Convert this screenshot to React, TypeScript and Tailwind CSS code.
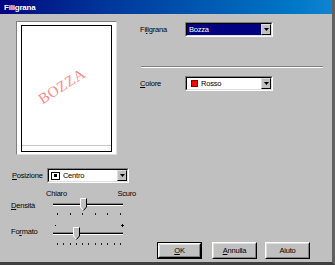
import React from "react";

const sunken = "border-t-[#808080] border-l-[#808080] border-r-white border-b-white";

function Arrow() {
  return (
    <div className="w-[10px] h-full bg-[#c0c0c0] border border-t-[#dfdfdf] border-l-[#dfdfdf] border-r-black border-b-black flex items-center justify-center">
      <svg width="5" height="3" viewBox="0 0 5 3">
        <polygon points="0,0 5,0 2.5,3" fill="#000" />
      </svg>
    </div>
  );
}

function Combo({
  className,
  children,
  selected,
}: {
  className: string;
  children: React.ReactNode;
  selected?: boolean;
}) {
  return (
    <div className={`h-[15px] border ${sunken} ${className}`}>
      <div className="h-full border border-t-black border-l-black border-r-[#dfdfdf] border-b-[#dfdfdf] bg-white flex">
        <div
          className={`flex-1 flex items-center gap-[3px] pl-[2px] ${
            selected ? "bg-[#000080] text-white" : "text-black"
          }`}
        >
          {children}
        </div>
        <Arrow />
      </div>
    </div>
  );
}

function Button({ children, isDefault }: { children: React.ReactNode; isDefault?: boolean }) {
  const inner = (
    <div className="w-full h-full border border-t-white border-l-white border-r-black border-b-black">
      <div className="w-full h-full border border-t-[#dfdfdf] border-l-[#dfdfdf] border-r-[#808080] border-b-[#808080] flex items-center justify-center bg-[#c0c0c0]">
        {children}
      </div>
    </div>
  );
  return (
    <div className={`w-[45px] h-[17px] ${isDefault ? "border border-black" : ""}`}>{inner}</div>
  );
}

function Thumb() {
  return (
    <svg width="8" height="14" viewBox="0 0 8 14">
      <polygon points="0,0 7,0 7,9 3.5,13 0,9" fill="#c0c0c0" />
      <polyline points="0.5,9 0.5,0.5 6.5,0.5" fill="none" stroke="#fff" strokeWidth="1" />
      <polyline points="0.5,9 3.5,12.5" fill="none" stroke="#fff" strokeWidth="1" />
      <polyline points="6.5,0.5 6.5,9 3.5,12.5" fill="none" stroke="#000" strokeWidth="1" />
    </svg>
  );
}

function Slider({ pos }: { pos: number }) {
  return (
    <div className="relative w-[74px] h-[14px]">
      <div className="absolute left-[1px] top-[5px] w-[70px] h-[3px] border-t border-t-[#808080] border-b border-b-white" />
      <div className="absolute left-[1px] top-[6px] w-[70px] h-[1px] bg-black" />
      <div className="absolute top-0" style={{ left: pos }}>
        <Thumb />
      </div>
    </div>
  );
}

function Ticks({ n }: { n: number }) {
  return (
    <div className="ml-[46px] w-[64px] flex justify-between">
      {Array.from({ length: n }).map((_, i) => (
        <div key={i} className="w-[1px] h-[2px] bg-[#202020]" />
      ))}
    </div>
  );
}

export default function App() {
  return (
    <div className="w-[335px] h-[265px] bg-[#c0c0c0] flex flex-col border-r-[3px] border-b-[3px] border-r-[#606060] border-b-[#404040] font-['Liberation_Sans',Arial,sans-serif] text-[7.5px] leading-[9px] text-black tracking-[-0.2px] overflow-hidden">
      <div className="h-[14px] shrink-0 bg-gradient-to-r from-[#000080] to-[#1084d0] flex items-center pl-[4px] text-white font-bold text-[8px]">
        Filigrana
      </div>
      <div className="flex flex-1">
        {/* left column */}
        <div className="w-[129px] pl-[11px] flex flex-col">
          <div className="ml-[5px] mt-[7px] w-[101px] h-[134px] border border-t-[#808080] border-l-[#808080] border-r-[#dfdfdf] border-b-[#dfdfdf] bg-white pl-[4px] pt-[3px]">
            <div className="relative w-[91px] h-[127px] border border-black bg-white flex flex-col overflow-hidden">
              <div className="mt-auto mb-[5px] h-[1px] bg-[#c8c8c8]" />
              <div className="absolute left-[10px] top-[53px] w-[60px] text-center -rotate-[33deg] font-['Liberation_Serif',serif] text-[15px] leading-[15px] tracking-[0.5px] text-[#ff8a8a]">
                BOZZA
              </div>
            </div>
          </div>
          <div className="mt-[13px] h-[15px] flex items-center">
            <span className="ml-[1px] w-[37px]">
              <span className="underline">P</span>osizione
            </span>
            <Combo className="w-[87px]">
              <span className="w-[9px] h-[8px] border border-black bg-white flex items-center justify-center">
                <span className="w-[3px] h-[3px] bg-black" />
              </span>
              <span>Centro</span>
            </Combo>
          </div>
          <div className="mt-[6px] h-[9px] flex">
            <span className="ml-[35px]">Chiaro</span>
            <span className="ml-auto mr-[-7px]">Scuro</span>
          </div>
          <div className="h-[14px] flex items-center">
            <span className="w-[41px]">
              <span className="underline">D</span>ensità
            </span>
            <Slider pos={28} />
          </div>
          <div className="h-[4px] pt-[1px]">
            <Ticks n={6} />
          </div>
          <div className="mt-[7px] h-[4px] relative flex items-center">
            <div className="ml-[44px] w-[1px] h-[1px] bg-black" />
            <div className="ml-[65px] relative w-[3px] h-[3px]">
              <div className="absolute left-0 top-[1px] w-[3px] h-[1px] bg-black" />
              <div className="absolute left-[1px] top-0 w-[1px] h-[3px] bg-black" />
            </div>
          </div>
          <div className="h-[14px] flex items-start">
            <span className="w-[41px]">
              Fo<span className="underline">r</span>mato
            </span>
            <Slider pos={21} />
          </div>
          <div className="h-[4px] pt-[2px]">
            <Ticks n={11} />
          </div>
        </div>
        {/* right column */}
        <div className="flex-1 pl-[11px] flex flex-col">
          <div className="mt-[8px] h-[15px] flex items-center">
            <span className="w-[45px]">
              Fi<span className="underline">l</span>igrana
            </span>
            <Combo className="w-[88px]" selected>
              <span>Bozza</span>
            </Combo>
          </div>
          <div className="mt-[29px] ml-[1px] w-[182px] h-[2px] border-t border-t-[#808080] border-b border-b-white" />
          <div className="mt-[8px] h-[15px] flex items-center">
            <span className="w-[45px]">
              <span className="underline">C</span>olore
            </span>
            <Combo className="w-[88px]">
              <span className="ml-[2px] w-[7px] h-[7px] bg-[#ff0000] border border-[#800000]" />
              <span>Rosso</span>
            </Combo>
          </div>
          <div className="mt-auto mb-[3px] flex">
            <div className="ml-[17px]">
              <Button isDefault>
                <span>
                  <span className="underline">O</span>K
                </span>
              </Button>
            </div>
            <div className="ml-[10px]">
              <Button>
                <span>
                  <span className="underline">A</span>nnulla
                </span>
              </Button>
            </div>
            <div className="ml-[8px]">
              <Button>
                <span>Aiuto</span>
              </Button>
            </div>
          </div>
        </div>
      </div>
    </div>
  );
}
